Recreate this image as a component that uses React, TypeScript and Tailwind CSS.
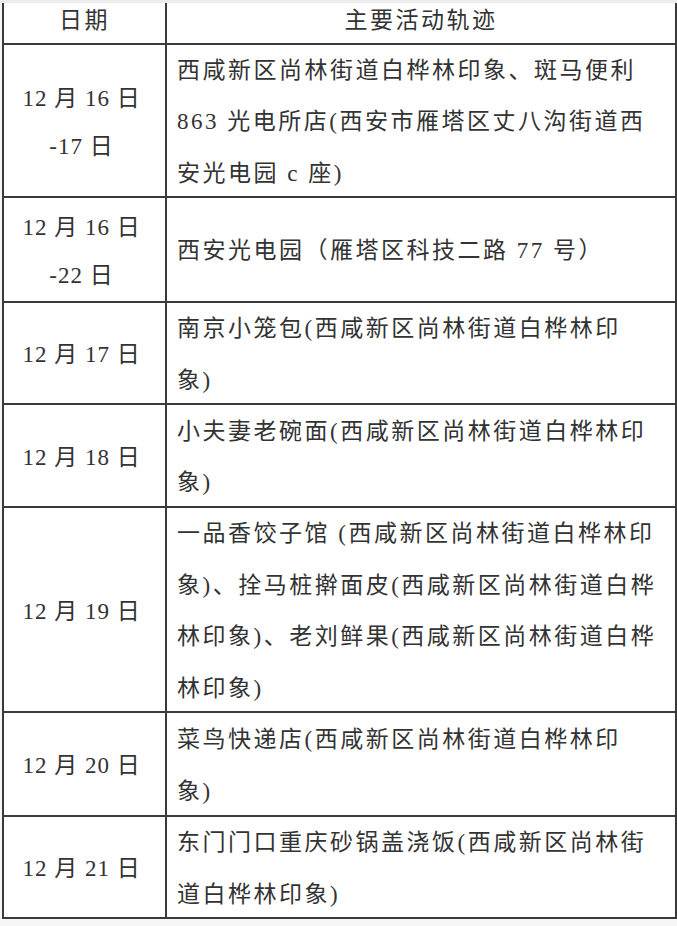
import React from 'react'

type Row = {
  date: string[]
  lines: string[]
  h: string
}

const rows: Row[] = [
  {
    date: ['12 月 16 日', '-17 日'],
    lines: ['西咸新区尚林街道白桦林印象、斑马便利', '863 光电所店(西安市雁塔区丈八沟街道西', '安光电园 c 座)'],
    h: 'h-[153px]',
  },
  {
    date: ['12 月 16 日', '-22 日'],
    lines: ['西安光电园（雁塔区科技二路 77 号）'],
    h: 'h-[105px]',
  },
  {
    date: ['12 月 17 日'],
    lines: ['南京小笼包(西咸新区尚林街道白桦林印', '象)'],
    h: 'h-[102px]',
  },
  {
    date: ['12 月 18 日'],
    lines: ['小夫妻老碗面(西咸新区尚林街道白桦林印', '象)'],
    h: 'h-[103px]',
  },
  {
    date: ['12 月 19 日'],
    lines: [
      '一品香饺子馆 (西咸新区尚林街道白桦林印',
      '象)、拴马桩擀面皮(西咸新区尚林街道白桦',
      '林印象)、老刘鲜果(西咸新区尚林街道白桦',
      '林印象)',
    ],
    h: 'h-[205px]',
  },
  {
    date: ['12 月 20 日'],
    lines: ['菜鸟快递店(西咸新区尚林街道白桦林印', '象)'],
    h: 'h-[104px]',
  },
  {
    date: ['12 月 21 日'],
    lines: ['东门门口重庆砂锅盖浇饭(西咸新区尚林街', '道白桦林印象)'],
    h: 'h-[102px]',
  },
]

export default function App() {
  return (
    <div className="w-[677px] h-[926px] bg-[#f5f5f5] overflow-hidden font-[family-name:'Liberation_Serif','Noto_Sans_CJK_SC',serif] text-[23px] tracking-[2.5px] text-[#333]">
      {/* faded strip above the cut-off table */}
      <div className="h-[3px] bg-[#ececec]" />

      <div className="ml-[2px] w-[675px] bg-white border-x-2 border-[#3a3a3a]">
        {/* Header */}
        <div className="flex h-[42px] border-b-2 border-[#3a3a3a]">
          <div className="w-[163px] flex-shrink-0 border-r-2 border-[#3a3a3a] flex items-center justify-center pb-[3px]">
            日期
          </div>
          <div className="flex-1 flex items-center justify-center pb-[3px]">主要活动轨迹</div>
        </div>

        {rows.map((row, i) => (
          <div key={i} className={`flex border-b-2 border-[#3a3a3a] ${row.h}`}>
            <div className="w-[163px] flex-shrink-0 border-r-2 border-[#3a3a3a] flex flex-col items-center justify-center pr-[6px] pt-[4px] leading-[48px] tracking-[1px]">
              {row.date.map((d, j) => (
                <div key={j} className="whitespace-nowrap">
                  {d}
                </div>
              ))}
            </div>
            <div className="flex-1 pl-[10px] pt-[3px] flex flex-col justify-center leading-[51.5px]">
              {row.lines.map((l, j) => (
                <div key={j} className="whitespace-nowrap">
                  {l}
                </div>
              ))}
            </div>
          </div>
        ))}
      </div>
    </div>
  )
}
